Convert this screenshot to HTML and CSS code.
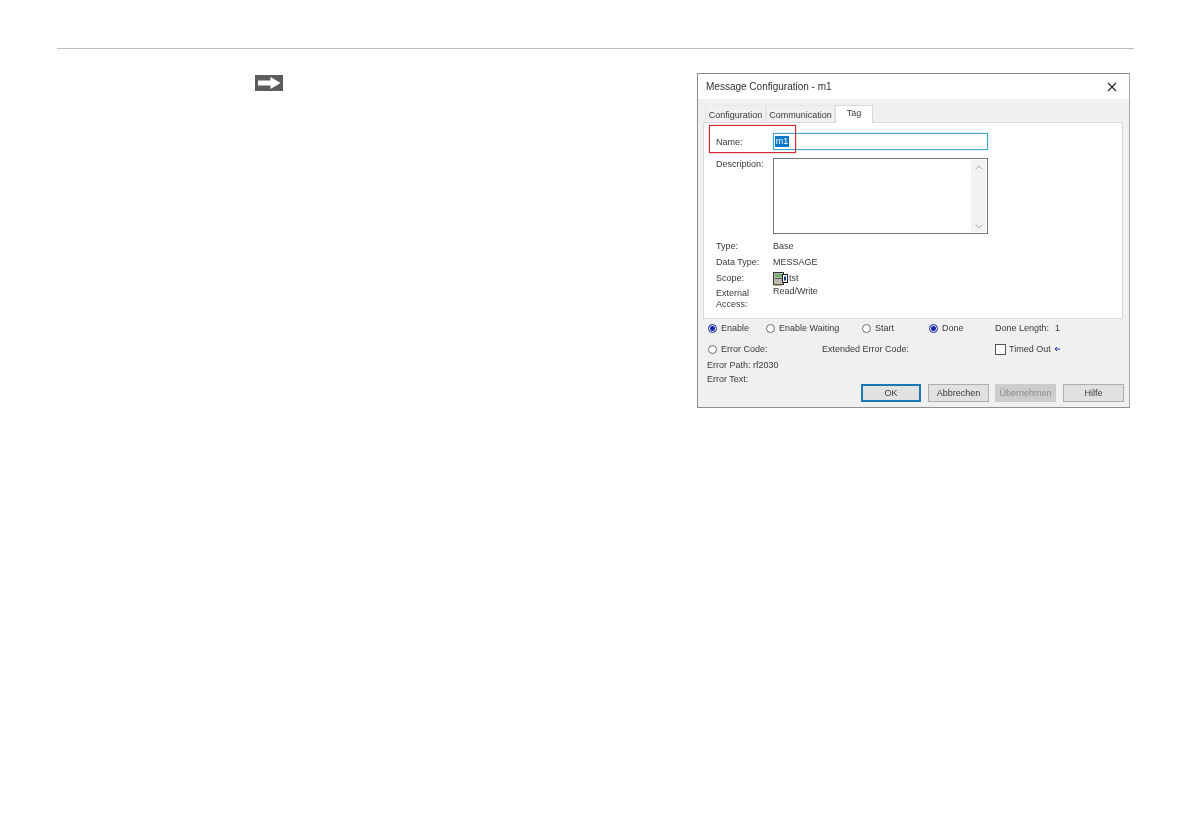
FILE: index.html
```html
<!DOCTYPE html>
<html lang="en">
<head>
<meta charset="utf-8">
<title>Message Configuration</title>
<link rel="stylesheet" href="styles.css">
</head>
<body>
<header class="rule"></header>
<main class="content">
  <svg class="step-arrow" width="28" height="16" viewBox="0 0 28 16" aria-hidden="true">
    <rect width="28" height="16" fill="#5c5c5c"/>
    <path d="M3 5.500H15.500V2L25.500 8L15.500 14V10.500H3Z" fill="#fff"/>
  </svg>
  <section class="dialog">
    <div class="titlebar">
      <span class="title">Message Configuration - m1</span>
      <svg class="close" width="10" height="10" viewBox="0 0 10 10" aria-hidden="true">
        <path d="M1 1L9 9M9 1L1 9" stroke="#222" stroke-width="1.1" fill="none"/>
      </svg>
    </div>
    <div class="tabs">
      <span class="tab tab-config">Configuration</span>
      <span class="tab tab-comm">Communication</span>
      <span class="tab tab-active">Tag</span>
    </div>
    <div class="panel">
      <div class="highlight"></div>
      <div class="field field-name">
        <span class="label">Name:</span>
        <div class="name-input"><span class="selected">m1</span></div>
      </div>
      <div class="field field-desc">
        <span class="label">Description:</span>
        <div class="textarea">
          <div class="scrollbar">
            <svg width="8" height="5" viewBox="0 0 8 5" aria-hidden="true"><path d="M0.500 4.500L4 1L7.500 4.500" stroke="#a8a8a8" fill="none"/></svg>
            <svg width="8" height="5" viewBox="0 0 8 5" aria-hidden="true"><path d="M0.500 0.500L4 4L7.500 0.500" stroke="#a8a8a8" fill="none"/></svg>
          </div>
        </div>
      </div>
      <div class="field field-info field-type"><span class="label">Type:</span><span>Base</span></div>
      <div class="field field-info"><span class="label">Data Type:</span><span>MESSAGE</span></div>
      <div class="field field-info">
        <span class="label">Scope:</span>
        <span class="scope">
          <svg width="15" height="15" viewBox="0 0 15 15" aria-hidden="true">
            <rect x="0.500" y="1.500" width="10" height="12" fill="#b9b9ad" stroke="#333"/>
            <rect x="2" y="3" width="7" height="3" fill="#6fae6a"/>
            <rect x="2" y="7" width="7" height="1" fill="#555"/>
            <rect x="9.500" y="3.500" width="5" height="8" fill="#fff" stroke="#222"/>
            <rect x="11" y="5.500" width="2" height="4" fill="#1c3f8f"/>
            <rect x="1" y="13" width="8" height="1.500" fill="#6b5a34"/>
          </svg>
          tst
        </span>
      </div>
      <div class="field field-access">
        <span class="label label-access">External Access:</span>
        <span class="access-value">Read/Write</span>
      </div>
    </div>
    <div class="status status-one">
      <span class="option opt-enable"><i class="radio on"></i>Enable</span>
      <span class="option opt-waiting"><i class="radio"></i>Enable Waiting</span>
      <span class="option opt-start"><i class="radio"></i>Start</span>
      <span class="option opt-done"><i class="radio on"></i>Done</span>
      <span class="done-length">Done Length:</span><span>1</span>
    </div>
    <div class="status status-two">
      <span class="option opt-error"><i class="radio"></i>Error Code:</span>
      <span class="opt-extended">Extended Error Code:</span>
      <span class="option option-check"><i class="checkbox"></i>Timed Out</span>
      <svg class="back-arrow" width="6" height="6" viewBox="0 0 6 6" aria-hidden="true"><path d="M6 3H1M3 1L1 3L3 5" stroke="#1a2fb0" fill="none"/></svg>
    </div>
    <div class="errors">
      <div class="error-line">Error Path: rf2030</div>
      <div class="error-line">Error Text:</div>
    </div>
    <div class="buttons">
      <span class="button default">OK</span>
      <span class="button cancel">Abbrechen</span>
      <span class="button disabled">Übernehmen</span>
      <span class="button">Hilfe</span>
    </div>
  </section>
</main>
</body>
</html>
```
FILE: styles.css
```css
* { box-sizing: border-box; }
html, body { margin: 0; background: #fff; }
body {
  height: 839px;
  overflow: hidden;
  font-family: "Liberation Sans", Arial, sans-serif;
  font-size: 9px;
  color: #3a3a3a;
}
.rule {
  margin: 48px 57px 0;
  border-top: 1px solid #bdbdbd;
}
.content {
  display: flex;
  justify-content: space-between;
  align-items: flex-start;
  padding: 24px 61px 0 255px;
}
.step-arrow { display: block; margin-top: 2px; }
.dialog {
  width: 433px;
  height: 335px;
  background: #f0f0f0;
  border: 1px solid #8a8a8a;
  border-right-color: #a8a8a8;
  border-bottom-color: #8f8f8f;
  filter: blur(0.4px);
}
.titlebar {
  height: 25px;
  background: #fff;
  display: flex;
  align-items: center;
  justify-content: space-between;
  padding: 0 12px 0 8px;
}
.title { font-size: 10px; color: #333; }
.tabs {
  display: flex;
  align-items: flex-end;
  height: 23px;
  padding-left: 7px;
}
.tab {
  height: 17px;
  line-height: 18px;
  text-align: center;
  background: #f0f0f0;
  border: 1px solid #e6e6e6;
  border-bottom: 0;
}
.tab-config { width: 61px; }
.tab-comm { width: 69px; }
.tab-active {
  width: 38px;
  height: 18px;
  line-height: 15px;
  margin-bottom: -1px;
  background: #fff;
  border-color: #d9d9d9;
  position: relative;
  z-index: 1;
}
.panel {
  position: relative;
  width: 420px;
  height: 197px;
  margin-left: 5px;
  padding: 10px 0 0 12px;
  background: #fff;
  border: 1px solid #d9d9d9;
}
.highlight {
  position: absolute;
  left: 5px;
  top: 2px;
  width: 87px;
  height: 28px;
  border: 1px solid #d02a38;
  box-shadow: 0 0 1px #e0404c;
  z-index: 1;
}
.field { display: grid; grid-template-columns: 57px 215px; }
.field-name { height: 17px; align-items: center; }
.name-input {
  height: 17px;
  border: 1px solid #3fa6cc;
  box-shadow: 0 0 1px #6cc0dc;
  padding: 2px 0 2px 1px;
}
.selected {
  display: block;
  width: 14px;
  height: 11px;
  line-height: 11px;
  background: #0a78c8;
  color: #fff;
  text-align: center;
}
.field-desc { margin-top: 8px; height: 76px; }
.label { line-height: 12px; }
.textarea {
  display: flex;
  justify-content: flex-end;
  border: 1px solid #777;
  padding: 1px;
}
.scrollbar {
  width: 15px;
  background: #f2f2f2;
  display: flex;
  flex-direction: column;
  align-items: center;
  justify-content: space-between;
  padding: 5px 0 3px;
}
.field-info { height: 16px; align-items: center; line-height: 12px; }
.field-type { margin-top: 4px; }
.scope { display: flex; align-items: center; gap: 1px; }
.field-access { height: 24px; }
.label-access { width: 40px; line-height: 10.500px; padding-top: 2px; }
.access-value { line-height: 10px; }
.status { display: flex; align-items: center; padding-left: 10px; }
.status-one { height: 18px; }
.status-two { height: 16px; margin-top: 4px; }
.option { display: flex; align-items: center; gap: 4px; }
.option-check { gap: 3px; }
.opt-enable { width: 58px; }
.opt-waiting { width: 96px; }
.opt-start { width: 67px; }
.opt-done { width: 66px; }
.done-length { width: 60px; }
.opt-error { width: 114px; }
.opt-extended { width: 173px; }
.back-arrow { margin-left: 3px; }
.radio {
  width: 9px;
  height: 9px;
  border-radius: 50%;
  border: 1px solid #6a6a6a;
  background: #fff;
}
.radio.on {
  background: #1522b0;
  box-shadow: inset 0 0 0 1px #fff;
  border-color: #3c4ca8;
}
.checkbox {
  width: 11px;
  height: 11px;
  border: 1px solid #555;
  background: #fff;
}
.errors { padding-top: 1px; }
.error-line {
  height: 14px;
  line-height: 14px;
  padding-left: 9px;
}
.buttons {
  display: flex;
  justify-content: flex-end;
  gap: 7px;
  margin-top: -2px;
  padding-right: 5px;
}
.button {
  width: 61px;
  height: 18px;
  line-height: 16px;
  text-align: center;
  background: #e1e1e1;
  border: 1px solid #adadad;
}
.button.cancel { margin-right: -1px; }
.button.default { width: 60px; border: 2px solid #1a78b4; line-height: 14px; }
.button.disabled { background: #cccccc; border-color: #cccccc; color: #8a8a8a; }
```
